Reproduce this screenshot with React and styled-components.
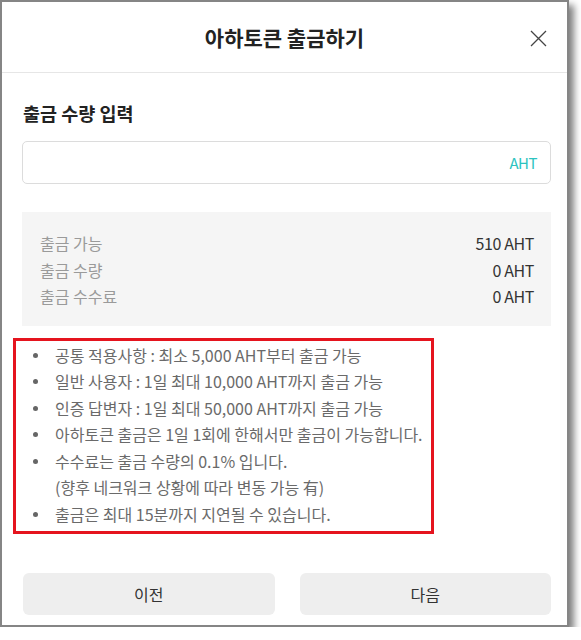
import React from "react";
import styled, { createGlobalStyle } from "styled-components";

const Global = createGlobalStyle`
  html, body { margin: 0; padding: 0; background: #fff; }
  body { font-family: "Noto Sans CJK KR", "Noto Sans", sans-serif; }
  * { box-sizing: border-box; }
`;

const Dialog = styled.div`
  width: 569px;
  height: 627px;
  border: 2px solid #858585;
  background: #fff;
  box-shadow: 5px 5px 7px rgba(0, 0, 0, 0.5);
  display: flex;
  flex-direction: column;
`;

const Header = styled.header`
  height: 71px;
  border-bottom: 1px solid #e6e6e6;
  display: flex;
  align-items: center;
  justify-content: center;
  position: relative;
  flex-shrink: 0;
`;

const Title = styled.h1`
  margin: 0;
  font-size: 21px;
  font-weight: 700;
  color: #222;
`;

const Close = styled.button`
  position: absolute;
  right: 19px;
  top: 26px;
  width: 20px;
  height: 20px;
  padding: 0;
  border: 0;
  background: none;
  display: flex;
  align-items: center;
  justify-content: center;
`;

const Body = styled.div`
  flex: 1;
  padding: 27px 16px 10px 20px;
  display: flex;
  flex-direction: column;
`;

const Label = styled.h2`
  margin: 0 0 15px 1px;
  font-size: 18.5px;
  font-weight: 700;
  color: #222;
  line-height: 26px;
`;

const InputBox = styled.div`
  height: 43px;
  border: 1px solid #dcdcdc;
  border-radius: 5px;
  display: flex;
  align-items: center;
  justify-content: flex-end;
  padding: 0 13px;
`;

const Unit = styled.span`
  font-size: 15px;
  color: #2cc3c0;
  letter-spacing: -0.5px;
`;

const Summary = styled.div`
  margin-top: 28px;
  background: #f5f5f5;
  padding: 18px 17px 16px 18px;
  display: flex;
  flex-direction: column;
`;

const Row = styled.div`
  display: flex;
  justify-content: space-between;
  align-items: center;
  height: 26.5px;
  font-size: 16px;
`;

const RowLabel = styled.span`
  color: #9a9a9a;
`;

const RowValue = styled.span`
  color: #333;
  letter-spacing: -0.4px;
`;

const Notice = styled.ul`
  margin: 12px 0 0 -9px;
  width: 421px;
  border: 3px solid #e5141e;
  padding: 1px 0 4px 39px;
  list-style: none;
`;

const Item = styled.li`
  position: relative;
  font-size: 16px;
  line-height: 26.5px;
  color: #6a6a6a;
  white-space: nowrap;
  &::before {
    content: "";
    position: absolute;
    left: -22px;
    top: 11px;
    width: 5px;
    height: 5px;
    border-radius: 50%;
    background: ${(p) => (p.$noBullet ? "transparent" : "#666")};
  }
`;

const Buttons = styled.div`
  margin-top: auto;
  display: grid;
  grid-template-columns: 1fr 1fr;
  gap: 25px;
  padding-left: 1px;
`;

const Btn = styled.button`
  height: 42px;
  border: 0;
  border-radius: 6px;
  background: #eeeeee;
  font-family: inherit;
  font-size: 16px;
  color: #333;
`;

const notices = [
  { t: "공통 적용사항 : 최소 5,000 AHT부터 출금 가능" },
  { t: "일반 사용자 : 1일 최대 10,000 AHT까지 출금 가능" },
  { t: "인증 답변자 : 1일 최대 50,000 AHT까지 출금 가능" },
  { t: "아하토큰 출금은 1일 1회에 한해서만 출금이 가능합니다." },
  { t: "수수료는 출금 수량의 0.1% 입니다." },
  { t: "(향후 네크워크 상황에 따라 변동 가능 有)", nb: true },
  { t: "출금은 최대 15분까지 지연될 수 있습니다." },
];

export default function App() {
  return (
    <>
      <Global />
      <Dialog>
        <Header>
          <Title>아하토큰 출금하기</Title>
          <Close aria-label="닫기">
            <svg width="17" height="17" viewBox="0 0 17 17">
              <path d="M1 1 L16 16 M16 1 L1 16" stroke="#444" strokeWidth="1.3" fill="none" />
            </svg>
          </Close>
        </Header>
        <Body>
          <Label>출금 수량 입력</Label>
          <InputBox>
            <Unit>AHT</Unit>
          </InputBox>
          <Summary>
            <Row><RowLabel>출금 가능</RowLabel><RowValue>510 AHT</RowValue></Row>
            <Row><RowLabel>출금 수량</RowLabel><RowValue>0 AHT</RowValue></Row>
            <Row><RowLabel>출금 수수료</RowLabel><RowValue>0 AHT</RowValue></Row>
          </Summary>
          <Notice>
            {notices.map((n, i) => (
              <Item key={i} $noBullet={n.nb}>{n.t}</Item>
            ))}
          </Notice>
          <Buttons>
            <Btn>이전</Btn>
            <Btn>다음</Btn>
          </Buttons>
        </Body>
      </Dialog>
    </>
  );
}
